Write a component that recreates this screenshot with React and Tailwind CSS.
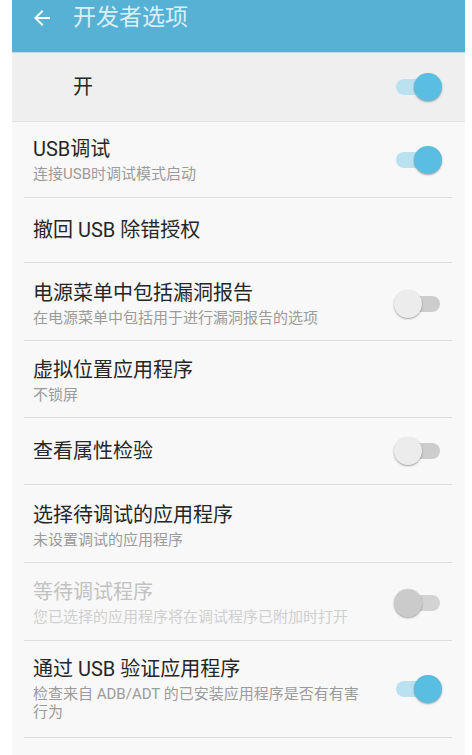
import React from "react";

const font = { fontFamily: 'Roboto, "Noto Sans CJK SC", sans-serif' };

function Toggle({ on, disabled }) {
  if (on) {
    return (
      <div className="relative w-[48px] h-[28px] shrink-0">
        <div className="absolute left-[2px] right-[2px] top-[6px] h-[16px] rounded-full bg-[#b9e1ef]" />
        <div className="absolute right-0 top-0 w-[28px] h-[28px] rounded-full bg-[#5abde2] shadow-[0_1px_2px_rgba(0,0,0,0.35)]" />
      </div>
    );
  }
  return (
    <div className="relative w-[48px] h-[28px] shrink-0">
      <div
        className={
          "absolute left-[2px] right-[2px] top-[6px] h-[16px] rounded-full " +
          (disabled ? "bg-[#d3d3d3]" : "bg-[#cdcdcd]")
        }
      />
      <div
        className={
          "absolute left-0 top-0 w-[28px] h-[28px] rounded-full shadow-[0_1px_2px_rgba(0,0,0,0.35)] " +
          (disabled ? "bg-[#cbcbcb]" : "bg-[#ececec]")
        }
      />
    </div>
  );
}

function Row({ title, sub, toggle, disabled, pad }) {
  return (
    <div className={"flex items-center pl-[21px] pr-[23px] " + pad}>
      <div className="flex-1 min-w-0 pr-[20px]">
        <div
          className={
            "text-[20px] leading-[26px] " +
            (disabled ? "text-[#c2c2c2]" : "text-[#262626]")
          }
        >
          {title}
        </div>
        {sub && (
          <div
            className={
              "mt-[3px] max-w-[335px] text-[15px] leading-[18px] " +
              (disabled ? "text-[#cfcfcf]" : "text-[#9b9b9b]")
            }
          >
            {sub}
          </div>
        )}
      </div>
      {toggle && <Toggle on={toggle === "on"} disabled={disabled} />}
    </div>
  );
}

function Divider() {
  return <div className="mx-[12px] mr-[13px] h-px bg-[#dedede]" />;
}

export default function App() {
  return (
    <div className="w-[472px] h-[755px] bg-white overflow-hidden" style={font}>
      <div className="ml-[12px] w-[453px] h-[755px] bg-[#f8f8f8] overflow-hidden">
        <div className="h-[53px] bg-[#57b1d5] border-b border-[#c3dbe4]">
          <div className="h-[36px] flex items-center">
            <svg
              width="24"
              height="24"
              viewBox="0 0 24 24"
              className="ml-[18px]"
              fill="#ffffff"
            >
              <path d="M20 11H7.83l5.59-5.59L12 4l-8 8 8 8 1.41-1.41L7.83 13H20v-2z" />
            </svg>
            <div className="ml-[19px] text-[23px] leading-[30px] text-[#d9eff8]">
              开发者选项
            </div>
          </div>
        </div>
        <div className="h-[69px] bg-[#efefef] flex items-center pl-[61px] pr-[23px] border-b border-[#e0e0e0]">
          <div className="flex-1 text-[20px] leading-[26px] text-[#262626]">开</div>
          <Toggle on />
        </div>
        <Row
          title="USB调试"
          sub="连接USB时调试模式启动"
          toggle="on"
          pad="pt-[14px] pb-[14px]"
        />
        <Divider />
        <Row title="撤回 USB 除错授权" pad="pt-[19px] pb-[19px]" />
        <Divider />
        <Row
          title="电源菜单中包括漏洞报告"
          sub="在电源菜单中包括用于进行漏洞报告的选项"
          toggle="off"
          pad="pt-[17px] pb-[13px]"
        />
        <Divider />
        <Row
          title="虚拟位置应用程序"
          sub="不锁屏"
          pad="pt-[16px] pb-[13px]"
        />
        <Divider />
        <Row title="查看属性检验" toggle="off" pad="pt-[19px] pb-[19px]" />
        <Divider />
        <Row
          title="选择待调试的应用程序"
          sub="未设置调试的应用程序"
          pad="pt-[17px] pb-[13px]"
        />
        <Divider />
        <Row
          title="等待调试程序"
          sub="您已选择的应用程序将在调试程序已附加时打开"
          toggle="off"
          disabled
          pad="pt-[16px] pb-[14px]"
        />
        <Divider />
        <Row
          title="通过 USB 验证应用程序"
          sub="检查来自 ADB/ADT 的已安装应用程序是否有有害行为"
          toggle="on"
          pad="pt-[15px] pb-[16px]"
        />
        <Divider />
      </div>
    </div>
  );
}
